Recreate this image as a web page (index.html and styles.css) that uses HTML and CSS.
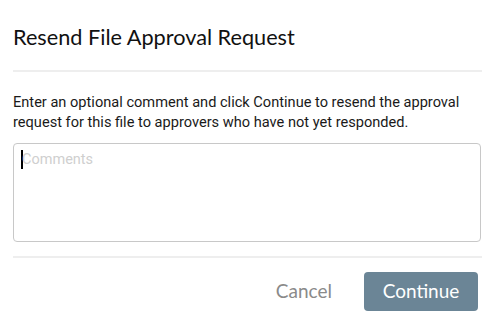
FILE: index.html
```html
<!DOCTYPE html>
<html>
<head>
<meta charset="utf-8">
<link rel="stylesheet" href="styles.css">
</head>
<body>
<div class="dialog">
  <div class="header">
    <h1 class="title">Resend File Approval Request</h1>
  </div>
  <div class="body">
    <p class="message">Enter an optional comment and click Continue to resend the approval request for this file to approvers who have not yet responded.</p>
    <div class="field"><span class="caret"></span><span class="placeholder">Comments</span></div>
  </div>
  <div class="footer">
    <button class="btn btn-cancel">Cancel</button>
    <button class="btn btn-primary">Continue</button>
  </div>
</div>
</body>
</html>
```
FILE: styles.css
```css
html, body {
  margin: 0;
  padding: 0;
  background: #fff;
}
.dialog {
  width: 469px;
  margin-left: 13px;
  font-family: Roboto, "Liberation Sans", sans-serif;
  color: #222;
}
.header {
  padding-top: 23px;
  padding-bottom: 19px;
  border-bottom: 2px solid #eeeeee;
}
.title {
  margin: 0;
  font-family: Lato, "Open Sans", sans-serif;
  font-weight: 400;
  font-size: 21.7px;
  line-height: 28px;
  color: #111;
}
.body {
  padding-top: 20px;
  padding-bottom: 14px;
  border-bottom: 2px solid #eeeeee;
}
.message {
  margin: 0 0 11px 0;
  font-size: 14.6px;
  line-height: 20px;
  color: #1a1a1a;
}
.field {
  box-sizing: border-box;
  width: 468px;
  height: 99px;
  border: 1px solid #c8c8c8;
  border-radius: 4px;
  padding: 6px 7px;
  display: flex;
  align-items: flex-start;
}
.caret {
  width: 2px;
  height: 19px;
  background: #000;
}
.placeholder {
  margin-left: -1px;
  font-size: 14.5px;
  line-height: 19px;
  color: #cfcfcf;
}
.footer {
  display: flex;
  justify-content: flex-end;
  align-items: center;
  padding-top: 14px;
  gap: 32px;
  padding-right: 4px;
}
.btn {
  font-family: Lato, "Open Sans", sans-serif;
  font-size: 19px;
  border: none;
  background: none;
  cursor: pointer;
}
.btn-cancel {
  color: #8a8a8a;
  padding: 0 0 3px 0;
}
.btn-primary {
  width: 114px;
  height: 39px;
  padding: 0 0 3px 0;
  background: #6b8596;
  color: #fff;
  border-radius: 4px;
}
```
